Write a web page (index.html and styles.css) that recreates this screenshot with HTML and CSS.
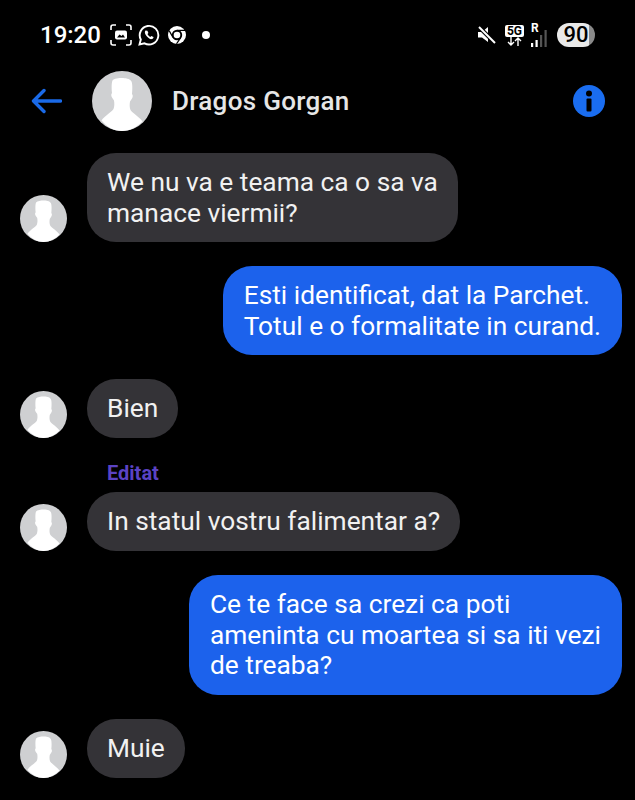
FILE: index.html
```html
<!DOCTYPE html>
<html lang="en">

<head>
    <meta charset="UTF-8">
    <meta name="viewport" content="width=device-width, initial-scale=1.0">
    <title>Dragos Gorgan</title>
    <link rel="stylesheet" href="styles.css">
</head>

<body>
    <svg class="defs" width="0" height="0">
        <symbol id="person" viewBox="0 0 60 60">
            <circle cx="30" cy="30" r="30" fill="#cfd0d2"/>
            <path d="M30 7c-3 0-8 .5-9.500 2.500-1 2-1 8-.5 12.500-1 1-1 3 0 4.500l2 3c.5 3 .5 6-.5 8.500-2 3-9 7-12 11.500C15 56 22 60 30 60s15-4 20.500-9.500c-3-4.500-10-8.500-12-11.500-1-2.500-1-5.500-.5-8.500l2-3c1-1.500 1-3.500 0-4.500.5-4.500.5-10.500-.5-12.500C38 7.500 33 7 30 7z" fill="#fff"/>
        </symbol>
    </svg>

    <div id="app">
        <div class="status">
            <span class="time">19:20</span>
            <svg class="ico" width="22" height="22" viewBox="0 0 22 22" fill="none" stroke="#fff" stroke-width="1.600">
                <path d="M1 6V3q0-2 2-2h3M16 1h3q2 0 2 2v3M1 16v3q0 2 2 2h3M16 21h3q2 0 2-2v-3"/>
                <rect x="5" y="6.500" width="12" height="9" rx="2" fill="#fff" stroke="none"/>
                <path d="M7 13.500l2.500-3 2 1.500 1.500-1.500 2 3z" fill="#000" stroke="none"/>
            </svg>
            <svg class="ico" width="22" height="22" viewBox="0 0 22 22" fill="none" stroke="#fff" stroke-width="1.900">
                <path d="M1.500 20.500l1.300-5A9.300 9.300 0 1 1 6.500 19.300z"/>
                <path d="M7.500 6.500c-1 1-1 3 1 5.500s4 3.500 5.500 3c1-.3 1.500-1 1.500-2l-2.200-1-1 1c-1-.4-2.300-1.700-2.800-2.900l.9-1-1-2.400z" fill="#fff" stroke="none"/>
            </svg>
            <svg class="ico chrome" width="18" height="18" viewBox="0 0 18 18">
                <circle cx="9" cy="9" r="9" fill="#fff"/>
                <circle cx="9" cy="9" r="5.200" fill="#000"/>
                <circle cx="9" cy="9" r="3.300" fill="#fff"/>
                <path d="M9 4.300h8M5 11.500L1.200 4.800M12.500 12l-4 5.800" stroke="#000" stroke-width="1.300" fill="none"/>
            </svg>
            <span class="dot"></span>
            <span class="spring"></span>
            <svg class="ico" width="20" height="20" viewBox="0 0 20 20">
                <path d="M1 7h4l6-5v15l-6-4.500H1z" fill="#fff"/>
                <path d="M1.500 1.500l16 16" stroke="#000" stroke-width="4"/>
                <path d="M2 2l16 16" stroke="#fff" stroke-width="2"/>
            </svg>
            <span class="net">
                <span class="net-5g">5G</span>
                <svg width="18" height="9" viewBox="0 0 18 9" fill="none" stroke="#fff" stroke-width="1.400">
                    <path d="M5 0v8M2 5l3 3 3-3M12 9V1M9 4l3-3 3 3"/>
                </svg>
            </span>
            <span class="signal">
                <span class="roam">R</span>
                <svg width="17" height="17" viewBox="0 0 17 17">
                    <rect x="1" y="13" width="2.200" height="4" fill="#fff"/>
                    <rect x="5.500" y="10" width="2.200" height="7" fill="#fff"/>
                    <rect x="10" y="5" width="2.200" height="12" fill="#555"/>
                    <rect x="14.500" y="0" width="2.200" height="17" fill="#555"/>
                </svg>
            </span>
            <span class="battery">90</span>
        </div>

        <div class="header">
            <svg class="back" width="31" height="26" viewBox="0 0 31 26" fill="none" stroke="#1a6ae8" stroke-width="3.400" stroke-linecap="round" stroke-linejoin="round">
                <path d="M29.500 13H2.500M13 2.500L2.500 13 13 23.500"/>
            </svg>
            <svg class="head-avatar" width="60" height="60"><use href="#person"/></svg>
            <span class="name">Dragos Gorgan</span>
            <svg class="info" width="32" height="32" viewBox="0 0 32 32">
                <circle cx="16" cy="16" r="16" fill="#1a6df0"/>
                <circle cx="16" cy="8.500" r="3" fill="#000"/>
                <rect x="13.500" y="13.500" width="5" height="13" rx="1" fill="#000"/>
            </svg>
        </div>

        <div class="messages">
            <div class="row">
                <svg class="avatar" width="47" height="47"><use href="#person"/></svg>
                <div class="bubble">We nu va e teama ca o sa va<br>manace viermii?</div>
            </div>
            <div class="row mine">
                <div class="bubble">Esti identificat, dat la Parchet.<br>Totul e o formalitate in curand.</div>
            </div>
            <div class="row">
                <svg class="avatar" width="47" height="47"><use href="#person"/></svg>
                <div class="bubble">Bien</div>
            </div>
            <div class="edited">Editat</div>
            <div class="row">
                <svg class="avatar" width="47" height="47"><use href="#person"/></svg>
                <div class="bubble">In statul vostru falimentar a?</div>
            </div>
            <div class="row mine">
                <div class="bubble">Ce te face sa crezi ca poti<br>ameninta cu moartea si sa iti vezi<br>de treaba?</div>
            </div>
            <div class="row">
                <svg class="avatar" width="47" height="47"><use href="#person"/></svg>
                <div class="bubble">Muie</div>
            </div>
        </div>
    </div>
</body>

</html>
```

FILE: styles.css
```css
* {
    margin: 0;
    padding: 0;
    box-sizing: border-box;
}

body {
    background-color: #000;
    color: #f1f1f1;
    font-family: 'Roboto', sans-serif;
    overflow: hidden;
}

.defs {
    display: block;
}

#app {
    width: 635px;
    height: 800px;
    overflow: hidden;
}

.status {
    display: flex;
    align-items: center;
    height: 30px;
    margin-top: 20px;
    padding: 0 40px;
    color: #fff;
}

.time {
    font-size: 24px;
    font-weight: 500;
    margin-right: 9px;
}

.ico {
    margin-right: 6px;
    flex-shrink: 0;
}

.chrome {
    margin-left: 2px;
}

.dot {
    width: 8px;
    height: 8px;
    margin-left: 10px;
    border-radius: 50%;
    background-color: #fff;
}

.spring {
    flex: 1;
}

.net {
    display: flex;
    flex-direction: column;
    align-items: center;
    margin: 0 6px 0 2px;
}

.net-5g {
    width: 19px;
    height: 12px;
    background-color: #fff;
    color: #000;
    font-size: 12px;
    font-weight: 700;
    line-height: 12px;
    text-align: center;
    border-radius: 2px;
}

.signal {
    position: relative;
    display: flex;
    margin-right: 8px;
    width: 19px;
    height: 24px;
    align-items: flex-end;
}

.roam {
    position: absolute;
    left: 1px;
    top: -2px;
    font-size: 12px;
    font-weight: 700;
}

.battery {
    width: 38px;
    height: 24px;
    border-radius: 12px;
    background: linear-gradient(90deg, #e9e9e9 85%, #8a8a8a 85%);
    color: #000;
    font-size: 22px;
    font-weight: 500;
    line-height: 24px;
    text-align: center;
}

.header {
    display: flex;
    align-items: center;
    height: 60px;
    margin-top: 21px;
    padding: 0 30px 0 31px;
}

.back {
    margin-right: 30px;
}

.name {
    flex: 1;
    margin-left: 20px;
    font-size: 26px;
    font-weight: 500;
    letter-spacing: 0.3px;
    color: #e6e6e6;
}

.messages {
    display: flex;
    flex-direction: column;
    gap: 24px;
    margin-top: 22px;
    padding: 0 13px 0 20px;
}

.row {
    display: flex;
    align-items: flex-end;
    gap: 20px;
}

.row.mine {
    justify-content: flex-end;
}

.bubble {
    min-height: 59px;
    padding: 14px 20px;
    border-radius: 29px;
    background-color: #343337;
    font-size: 26.300px;
    line-height: 30.500px;
    white-space: nowrap;
}

.mine .bubble {
    padding: 14px 21px;
    background-color: #1c62ec;
    color: #fff;
}

.edited {
    margin: 1px 0 -16px 87px;
    color: #5b43c4;
    font-size: 20px;
    font-weight: 700;
    line-height: 21px;
}
```
